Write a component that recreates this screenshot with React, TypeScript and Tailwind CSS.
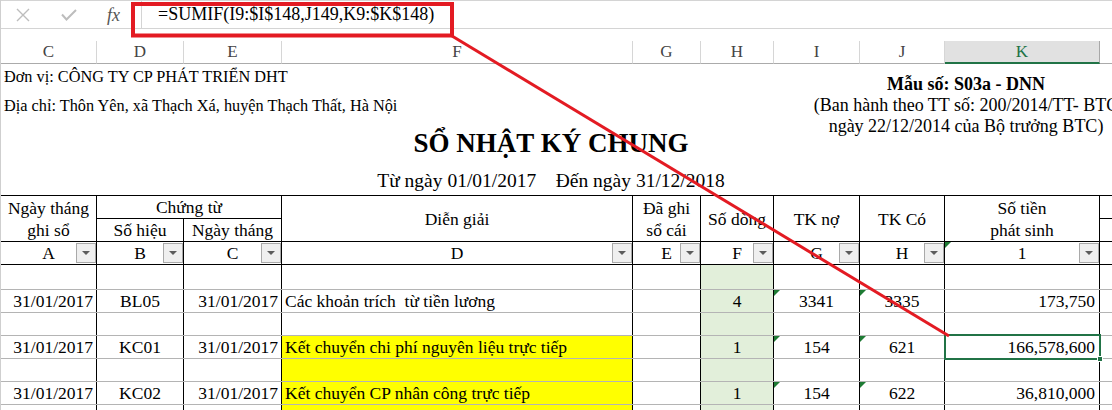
import React from 'react';

const sheetCols = [
  { letter: 'C', w: 'w-[96px]' },
  { letter: 'D', w: 'w-[87px]' },
  { letter: 'E', w: 'w-[98px]' },
  { letter: 'F', w: 'w-[351px]' },
  { letter: 'G', w: 'w-[68px]' },
  { letter: 'H', w: 'w-[73px]' },
  { letter: 'I', w: 'w-[86px]' },
  { letter: 'J', w: 'w-[85px]' },
];

const tableLetters = [
  { label: 'A', w: 'w-[96px]' },
  { label: 'B', w: 'w-[87px]' },
  { label: 'C', w: 'w-[98px]' },
  { label: 'D', w: 'w-[351px]' },
  { label: 'E', w: 'w-[68px]' },
  { label: 'F', w: 'w-[73px]' },
  { label: 'G', w: 'w-[86px]' },
  { label: 'H', w: 'w-[85px]' },
];

type Row = {
  h: string;
  date?: string;
  no?: string;
  desc?: string;
  f?: string;
  g?: string;
  hh?: string;
  k?: string;
  yellow?: boolean;
  selected?: boolean;
};

const rows: Row[] = [
  { h: 'h-[25px]' },
  {
    h: 'h-[23px]',
    date: '31/01/2017',
    no: 'BL05',
    desc: 'Các khoản trích  từ tiền lương',
    f: '4',
    g: '3341',
    hh: '3335',
    k: '173,750',
  },
  { h: 'h-[23px]' },
  {
    h: 'h-[23px]',
    date: '31/01/2017',
    no: 'KC01',
    desc: 'Kết chuyển chi phí nguyên liệu trực tiếp',
    f: '1',
    g: '154',
    hh: '621',
    k: '166,578,600',
    yellow: true,
    selected: true,
  },
  { h: 'h-[23px]', yellow: true },
  {
    h: 'h-[23px]',
    date: '31/01/2017',
    no: 'KC02',
    desc: 'Kết chuyển CP nhân công trực tiếp',
    f: '1',
    g: '154',
    hh: '622',
    k: '36,810,000',
    yellow: true,
  },
  { h: 'h-[23px]', yellow: true },
];

function FilterBtn() {
  return (
    <div className="absolute right-0 top-[1px] flex h-[20px] w-[20px] items-center justify-center border border-[#a9a9a9] bg-[#efefef]">
      <div className="h-0 w-0 border-x-[4px] border-t-[4px] border-x-transparent border-t-[#5c5c5c]" />
    </div>
  );
}

function Tri() {
  return <div className="absolute left-0 top-0 h-0 w-0 border-r-[6px] border-t-[6px] border-r-transparent border-t-[#1e7b34]" />;
}

export default function App() {
  return (
    <div className="relative h-[410px] w-[1112px] overflow-hidden border-l border-[#cfcfcf] bg-white font-['Liberation_Serif','Times_New_Roman',serif] text-black">
      {/* formula bar */}
      <div className="flex h-[29px] border-y border-[#d4d4d4]">
        <div className="flex w-[141px] shrink-0 items-center border-r border-[#d4d4d4]">
          <svg className="ml-[15px]" width="14" height="14" viewBox="0 0 14 14">
            <path d="M1 1L13 13M13 1L1 13" stroke="#bdbdbd" strokeWidth="1.4" fill="none" />
          </svg>
          <svg className="ml-[31px]" width="16" height="12" viewBox="0 0 16 12">
            <path d="M1 5.5L5.5 10.5L15 1" stroke="#bdbdbd" strokeWidth="2" fill="none" />
          </svg>
          <span className="ml-[30px] text-[18px] italic leading-[20px] text-[#555]">fx</span>
        </div>
        <div className="flex-1 pl-[16px] text-[18px] leading-[27px]">=SUMIF(I9:$I$148,J149,K9:$K$148)</div>
      </div>

      {/* column headers */}
      <div className="mt-[12px] flex h-[23px] text-[17px] leading-[22px] text-[#444]">
        {sheetCols.map((c) => (
          <div key={c.letter} className={`${c.w} shrink-0 border-b border-r border-[#d6d6d6] border-b-[#ababab] text-center`}>
            {c.letter}
          </div>
        ))}
        <div className="w-[155px] shrink-0 border-b-2 border-r border-[#a8a8a8] border-b-[#217346] bg-[#e1e1e1] text-center text-[#217346]">
          K
        </div>
        <div className="flex-1 border-b border-[#ababab]" />
      </div>

      {/* sheet top */}
      <div className="h-[131px]">
        <div className="flex h-[60px]">
          <div className="w-[780px] shrink-0 pl-[3px] pt-[3px] text-[16.3px] leading-[20px]">
            <div>Đơn vị: CÔNG TY CP PHÁT TRIỂN DHT</div>
            <div className="mt-[9px]">Địa chỉ: Thôn Yên, xã Thạch Xá, huyện Thạch Thất, Hà Nội</div>
          </div>
          <div className="w-[370px] shrink-0 whitespace-nowrap pt-[10px] text-center text-[18px] leading-[21px]">
            <div className="font-bold">Mẫu số: S03a - DNN</div>
            <div>(Ban hành theo TT số: 200/2014/TT- BTC</div>
            <div>ngày 22/12/2014 của Bộ trưởng BTC)</div>
          </div>
        </div>
        <div className="h-[38px] w-[1100px] text-center text-[27px] font-bold leading-[38px]">SỔ NHẬT KÝ CHUNG</div>
        <div className="h-[33px] w-[1100px] whitespace-pre pt-[9px] text-center text-[19.5px] leading-[20px]">
          Từ ngày 01/01/2017    Đến ngày 31/12/2018
        </div>
      </div>

      {/* table */}
      <div className="border-t border-black text-[17.5px] leading-[22px]">
        <div className="flex h-[46px] border-b border-black">
          <div className="flex w-[96px] shrink-0 flex-col items-center justify-center border-r border-black">
            <span>Ngày tháng</span>
            <span>ghi sổ</span>
          </div>
          <div className="flex w-[185px] shrink-0 flex-col">
            <div className="h-[23px] border-b border-r border-black text-center">Chứng từ</div>
            <div className="flex flex-1">
              <div className="w-[87px] border-r border-black text-center">Số hiệu</div>
              <div className="w-[98px] border-r border-black text-center">Ngày tháng</div>
            </div>
          </div>
          <div className="flex w-[351px] shrink-0 items-center justify-center border-r border-black">Diễn giải</div>
          <div className="flex w-[68px] shrink-0 flex-col items-center justify-center border-r border-black">
            <span>Đã ghi</span>
            <span>sổ cái</span>
          </div>
          <div className="flex w-[73px] shrink-0 items-center justify-center border-r border-black">Số dòng</div>
          <div className="flex w-[86px] shrink-0 items-center justify-center border-r border-black">TK nợ</div>
          <div className="flex w-[85px] shrink-0 items-center justify-center border-r border-black">TK Có</div>
          <div className="flex w-[155px] shrink-0 flex-col items-center justify-center border-r border-black">
            <span>Số tiền</span>
            <span>phát sinh</span>
          </div>
          <div className="flex-1">
            <div className="h-[23px] border-b border-black" />
          </div>
        </div>

        <div className="flex h-[23px] border-b border-black">
          {tableLetters.map((c) => (
            <div key={c.label} className={`${c.w} relative shrink-0 border-r border-black text-center`}>
              {c.label}
              <FilterBtn />
            </div>
          ))}
          <div className="relative w-[155px] shrink-0 border-r border-black text-center">
            1
            <Tri />
            <FilterBtn />
          </div>
          <div className="flex-1" />
        </div>

        {rows.map((r, i) => (
          <div key={i} className={`${r.h} flex border-b border-[#b4b4b4]`}>
            <div className="w-[96px] shrink-0 border-r border-black pr-[3px] text-right">{r.date}</div>
            <div className="w-[87px] shrink-0 border-r border-black text-center">{r.no}</div>
            <div className="w-[98px] shrink-0 border-r border-black pr-[3px] text-right">{r.date}</div>
            <div className={`${r.yellow ? 'bg-[#ffff00]' : ''} w-[351px] shrink-0 whitespace-pre border-r border-black pl-[3px]`}>
              {r.desc}
            </div>
            <div className="w-[68px] shrink-0 border-r border-black" />
            <div className="w-[73px] shrink-0 border-r border-black bg-[#e2efda] text-center">{r.f}</div>
            <div className="relative w-[86px] shrink-0 border-r border-black text-center">
              {r.g}
              {r.g && <Tri />}
            </div>
            <div className="relative w-[85px] shrink-0 border-r border-black text-center">
              {r.hh}
              {r.hh && <Tri />}
            </div>
            <div className="relative w-[155px] shrink-0 border-r border-black pr-[4px] text-right">
              {r.k}
              {r.selected && (
                <>
                  <div className="absolute -bottom-[2px] -left-[1px] -right-[2px] -top-[2px] z-10 border-2 border-[#217346]" />
                  <div className="absolute -bottom-[4px] -right-[4px] z-20 h-[6px] w-[6px] border border-white bg-[#217346]" />
                </>
              )}
            </div>
            <div className="flex-1" />
          </div>
        ))}
      </div>

      {/* red callout over the sheet */}
      <svg className="pointer-events-none absolute left-0 top-0 z-30" width="1112" height="410">
        <rect x="132" y="4" width="319" height="31.5" fill="none" stroke="#e31b23" strokeWidth="4" />
        <line x1="451" y1="36" x2="948" y2="336" stroke="#e31b23" strokeWidth="3" />
      </svg>
    </div>
  );
}
